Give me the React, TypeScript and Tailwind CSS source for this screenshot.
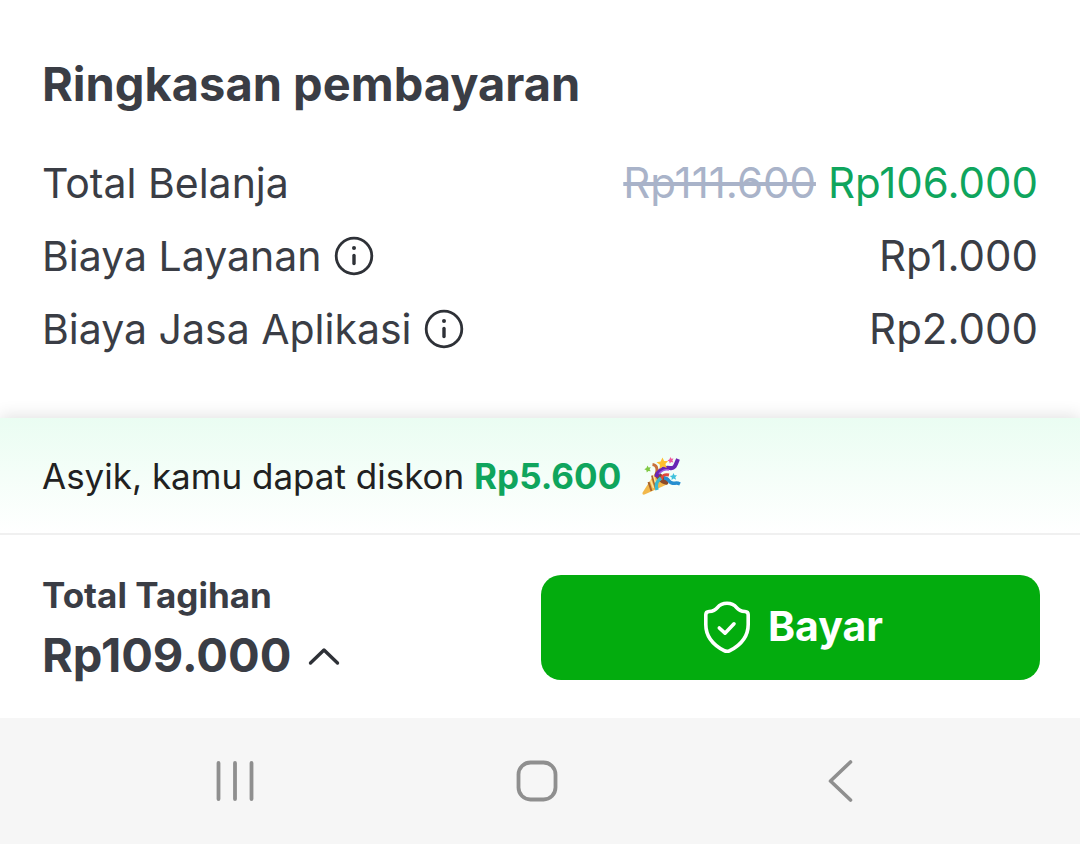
import type { ReactNode } from "react";

function InfoButton({ label }: { label: string }) {
  return (
    <button type="button" aria-label={label} className="shrink-0">
      <svg viewBox="0 0 40 40" className="size-10" fill="none">
        <circle cx="20" cy="20" r="17.8" stroke="#2e3137" strokeWidth="2.8" />
        <circle cx="20" cy="12" r="2" fill="#2e3137" />
        <path d="M20 19.500v8" stroke="#2e3137" strokeWidth="3.400" strokeLinecap="round" />
      </svg>
    </button>
  );
}

function SummaryRow({ label, info, children }: { label: string; info?: string; children: ReactNode }) {
  return (
    <div className="flex min-h-[73px] items-center justify-between gap-4">
      <dt className="flex items-center gap-3 text-[41px]">
        {label}
        {info && <InfoButton label={info} />}
      </dt>
      <dd className="flex items-center gap-3 text-right text-[42px]">{children}</dd>
    </div>
  );
}

function PartyPopper() {
  return (
    <svg viewBox="0 0 42 40" className="h-10 w-[42px] shrink-0" role="img" aria-label="Selamat">
      <path d="M11.5 8.5c4 .5 5.5 4 4 9" fill="none" stroke="#c8703a" strokeWidth="3" />
      <path d="M14 17l13 11L3.500 38.500c-1.700.5-2.400-.5-1.900-1.900z" fill="#f2b84b" />
      <path d="M11 19.500l4 13.500M7.500 26l3 9" stroke="#a8642c" strokeWidth="2" fill="none" />
      <path d="M12.500 19l2 8M9.500 24l3 8" stroke="#ffe39a" strokeWidth="1.500" fill="none" />
      <ellipse cx="20.500" cy="22.500" rx="3.500" ry="8.500" transform="rotate(-49 20.500 22.500)" fill="#8b4a2b" />
      <path d="M15 21c3-8 8-10 14-9 5 1 6-4 8-9" fill="none" stroke="#6a25b5" strokeWidth="4" />
      <path d="M18 18c3-4 6-5 10-4" fill="none" stroke="#a45be0" strokeWidth="1.500" />
      <path d="M20 24c1-5 4-6 8-5" fill="none" stroke="#e0483f" strokeWidth="3" />
      <path d="M23 22c5 0 4 4 8 5 3 1 4-1 8 1" fill="none" stroke="#278ed0" strokeWidth="3.500" />
      <path d="M16 34c-2-6 0-9 4-12" fill="none" stroke="#3cb8cf" strokeWidth="3.500" />
      <path d="M21.500 1.500l1.600 3.600 4-.1-2.700 3 1.400 4-3.800-1.600-3.400 2.500.3-4.200-3.400-2.400 4.100-.9z" fill="#ffc02e" />
      <path d="M29.500 1l.9 1.800 2.100-.2-1.100 1.900 1 1.900-2.200-.3-1.500 1.500-.4-2.100-1.900-1 1.900-1z" fill="#f05a9c" />
      <path d="M6.500 9.500l1 2 2.300-.2-1.200 2 1.100 2-2.300-.4-1.600 1.700-.4-2.400-2.100-1 2.100-1.100z" fill="#7fc943" />
      <path d="M32.500 17l1 2.300 2.500 0-1.700 1.900.8 2.500-2.400-1.100-2.200 1.500.3-2.600-2.100-1.600 2.600-.5z" fill="#3fc1dc" />
    </svg>
  );
}

export default function App() {
  return (
    <div className="flex min-h-screen flex-col bg-white font-['Inter','Liberation_Sans',sans-serif] text-[#3a3d45]">
      <main className="flex grow flex-col">
        <section className="grow px-[42px] pt-14 pb-[53px]">
          <h1 className="text-[47px] leading-14 font-bold">Ringkasan pembayaran</h1>
          <dl className="mt-[34px] leading-[54px]">
            <SummaryRow label="Total Belanja">
              <s className="text-[#a9b3c9] decoration-4">Rp111.600</s>
              <span className="text-[#0fa55d]">Rp106.000</span>
            </SummaryRow>
            <SummaryRow label="Biaya Layanan" info="Info Biaya Layanan">
              Rp1.000
            </SummaryRow>
            <SummaryRow label="Biaya Jasa Aplikasi" info="Info Biaya Jasa Aplikasi">
              Rp2.000
            </SummaryRow>
          </dl>
        </section>

        <aside className="flex min-h-[117px] items-center gap-5 border-b-2 border-[#f0f0f0] bg-linear-to-b from-[#eafdf2] to-white px-[42px] text-[35px] leading-12 text-[#212121] shadow-[0_-2px_16px_rgba(0,0,0,0.12)]">
          <p>
            Asyik, kamu dapat diskon <strong className="font-bold text-[#0fa55d]">Rp5.600</strong>
          </p>
          <PartyPopper />
        </aside>

        <section className="relative flex items-start justify-between gap-6 bg-white pt-10 pr-10 pb-[35px] pl-[42px]">
          <div>
            <h2 className="text-[35px] leading-10 font-bold">Total Tagihan</h2>
            <button type="button" aria-expanded="false" className="mt-3 flex items-center gap-4 text-[47px] leading-14 font-bold">
              Rp109.000
              <svg viewBox="0 0 34 24" className="h-6 w-[34px]" fill="none" aria-hidden="true">
                <path d="M3.500 20L17 7l13.500 13" stroke="#2e3137" strokeWidth="3.400" strokeLinecap="round" strokeLinejoin="round" />
              </svg>
            </button>
          </div>
          <button type="button" className="flex h-[105px] w-1/2 items-center justify-center gap-4 rounded-[20px] bg-[#03ac0e] pb-1 pl-1 text-[41px] leading-12 font-bold text-white">
            <svg viewBox="0 0 50 54" className="h-[54px] w-[50px]" fill="none" stroke="currentColor" strokeLinecap="round" strokeLinejoin="round" aria-hidden="true">
              <path d="M25 4.200c-4 0-7.300 1.500-9.600 4.400-1.900 2.400-4.700 3.700-8.300 3.900-2.200.1-3.300 1.200-3.300 3.200v9.800c0 11.500 6.300 20 18.400 26.200 2 1 3.600 1 5.600 0 12.100-6.200 18.400-14.700 18.400-26.200v-9.800c0-2-1.100-3.100-3.300-3.200-3.600-.2-6.400-1.500-8.300-3.900-2.300-2.900-5.600-4.400-9.600-4.400z" strokeWidth="3.600" />
              <path d="M17.300 29l5.700 5.200 9-9.400" strokeWidth="3.600" />
            </svg>
            Bayar
          </button>
        </section>
      </main>

      <nav aria-label="Navigasi sistem" className="flex h-[126px] items-center justify-center gap-[262px] bg-[#f6f6f6] pr-1.5">
        <button type="button" aria-label="Aplikasi terbaru">
          <svg viewBox="0 0 42 42" className="size-[42px]" stroke="#8f8f8f" strokeWidth="3.800" strokeLinecap="round">
            <path d="M6.500 3v36M23 3v36M39.500 3v36" />
          </svg>
        </button>
        <button type="button" aria-label="Beranda">
          <svg viewBox="0 0 42 42" className="size-[42px]" fill="none" stroke="#8f8f8f" strokeWidth="3.800">
            <rect x="2.500" y="2.500" width="37" height="37" rx="12" />
          </svg>
        </button>
        <button type="button" aria-label="Kembali">
          <svg viewBox="0 0 42 42" className="size-[42px]" fill="none" stroke="#8f8f8f" strokeWidth="3.600" strokeLinecap="round" strokeLinejoin="round">
            <path d="M30.500 2L10.500 21l20 19" />
          </svg>
        </button>
      </nav>
    </div>
  );
}
